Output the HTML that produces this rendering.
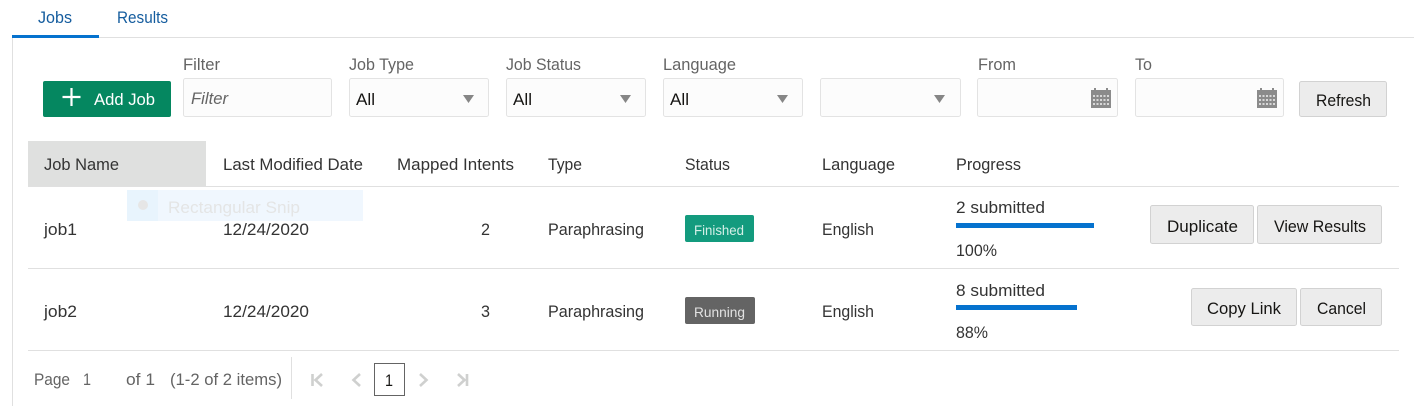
<!DOCTYPE html>
<html><head><meta charset="utf-8"><style>
html,body{margin:0;padding:0;background:#fff;width:1414px;height:406px;overflow:hidden}
svg{display:block}
text{font-family:"Liberation Sans",sans-serif;font-size:17px;fill:#333;}
.l{fill:#646464}
.b{fill:#161513}
.btn{fill:#ececec;stroke:#d2d2d2}
.in{fill:#fcfcfc;stroke:#e3e3e3}
.ar{fill:#868686}
.pg{fill:none;stroke:#cfd0cf;stroke-width:2.600}
</style></head><body>
<svg width="1414" height="406" viewBox="0 0 1414 406" xmlns="http://www.w3.org/2000/svg">
<defs>
<g id="cal"><path fill="#8b8b8b" d="M0 2h3V0h2v2h10V0h2v2h3v18H0z"/><g fill="#d8d8d8"><rect x="2" y="7" width="2" height="2"/><rect x="5.500" y="7" width="2" height="2"/><rect x="9" y="7" width="2" height="2"/><rect x="12.500" y="7" width="2" height="2"/><rect x="16" y="7" width="2" height="2"/><rect x="2" y="11" width="2" height="2"/><rect x="5.500" y="11" width="2" height="2"/><rect x="9" y="11" width="2" height="2"/><rect x="12.500" y="11" width="2" height="2"/><rect x="16" y="11" width="2" height="2"/><rect x="2" y="15" width="2" height="2"/><rect x="5.500" y="15" width="2" height="2"/><rect x="9" y="15" width="2" height="2"/><rect x="12.500" y="15" width="2" height="2"/><rect x="16" y="15" width="2" height="2"/></g></g>
</defs>

<!-- tabs -->
<rect x="12" y="37" width="1402" height="1" fill="#e0e0e0"/>
<rect x="12" y="38" width="1" height="368" fill="#e0e0e0"/>
<rect x="12" y="35" width="87" height="3" fill="#0572ce"/>
<text x="38" y="23" textLength="34" lengthAdjust="spacingAndGlyphs" style="fill:#145c9e">Jobs</text>
<text x="117" y="23" textLength="51" lengthAdjust="spacingAndGlyphs" style="fill:#145c9e">Results</text>

<!-- toolbar -->
<rect x="43" y="81" width="128" height="36" rx="2" fill="#058760"/>
<path d="M71.500 88v18M62.500 97h18" stroke="#fff" stroke-width="2.200" fill="none"/>
<text x="94" y="105" textLength="61" lengthAdjust="spacingAndGlyphs" style="fill:#fff">Add Job</text>

<text class="l" x="183" y="70" textLength="37" lengthAdjust="spacingAndGlyphs">Filter</text>
<rect class="in" x="183.500" y="78.500" width="148" height="38" rx="2"/>
<text class="l" x="191" y="104" textLength="37" lengthAdjust="spacingAndGlyphs" font-style="italic">Filter</text>

<text class="l" x="349" y="70" textLength="65" lengthAdjust="spacingAndGlyphs">Job Type</text>
<rect class="in" x="349.500" y="78.500" width="139" height="38" rx="2"/>
<text class="b" x="356" y="105" textLength="19" lengthAdjust="spacingAndGlyphs">All</text>
<path class="ar" d="M463 95h11l-5.500 8z"/>

<text class="l" x="506" y="70" textLength="75" lengthAdjust="spacingAndGlyphs">Job Status</text>
<rect class="in" x="506.500" y="78.500" width="139" height="38" rx="2"/>
<text class="b" x="513" y="105" textLength="19" lengthAdjust="spacingAndGlyphs">All</text>
<path class="ar" d="M620 95h11l-5.500 8z"/>

<text class="l" x="663" y="70" textLength="73" lengthAdjust="spacingAndGlyphs">Language</text>
<rect class="in" x="663.500" y="78.500" width="139" height="38" rx="2"/>
<text class="b" x="670" y="105" textLength="19" lengthAdjust="spacingAndGlyphs">All</text>
<path class="ar" d="M777 95h11l-5.500 8z"/>

<rect class="in" x="820.500" y="78.500" width="140" height="38" rx="2"/>
<path class="ar" d="M934 95h11l-5.500 8z"/>

<text class="l" x="978" y="70" textLength="38" lengthAdjust="spacingAndGlyphs">From</text>
<rect class="in" x="977.500" y="78.500" width="140" height="38" rx="2"/>
<use href="#cal" x="1091" y="88"/>

<text class="l" x="1135" y="70" textLength="17" lengthAdjust="spacingAndGlyphs">To</text>
<rect class="in" x="1135.500" y="78.500" width="148" height="38" rx="2"/>
<use href="#cal" x="1257" y="88"/>

<rect class="btn" x="1299.500" y="81.500" width="87" height="35" rx="2"/>
<text class="b" x="1316" y="106" textLength="55" lengthAdjust="spacingAndGlyphs">Refresh</text>

<!-- table header -->
<rect x="28" y="141" width="178" height="45" fill="#dfe0df"/>
<rect x="28" y="186" width="1371" height="1" fill="#e0e0e0"/>
<rect x="28" y="268" width="1371" height="1" fill="#e0e0e0"/>
<rect x="28" y="350" width="1371" height="1" fill="#e0e0e0"/>
<text x="44" y="170" textLength="75" lengthAdjust="spacingAndGlyphs">Job Name</text>
<text x="223" y="170" textLength="140" lengthAdjust="spacingAndGlyphs">Last Modified Date</text>
<text x="397" y="170" textLength="117" lengthAdjust="spacingAndGlyphs">Mapped Intents</text>
<text x="548" y="170" textLength="34" lengthAdjust="spacingAndGlyphs">Type</text>
<text x="685" y="170" textLength="45" lengthAdjust="spacingAndGlyphs">Status</text>
<text x="822" y="170" textLength="73" lengthAdjust="spacingAndGlyphs">Language</text>
<text x="956" y="170" textLength="65" lengthAdjust="spacingAndGlyphs">Progress</text>

<!-- snip overlay -->
<rect x="127" y="190" width="236" height="31" fill="#f0f7fe"/>
<rect x="127" y="190" width="31" height="31" fill="#e8f4fd"/>
<circle cx="143" cy="205" r="5" fill="#e6e6e6"/>
<text x="168" y="213" textLength="132" lengthAdjust="spacingAndGlyphs" style="fill:#e4e5e5">Rectangular Snip</text>

<!-- row 1 -->
<text x="44" y="235" textLength="33" lengthAdjust="spacingAndGlyphs">job1</text>
<text x="223" y="235" textLength="86" lengthAdjust="spacingAndGlyphs">12/24/2020</text>
<text x="481" y="235" textLength="9" lengthAdjust="spacingAndGlyphs">2</text>
<text x="548" y="235" textLength="96" lengthAdjust="spacingAndGlyphs">Paraphrasing</text>
<rect x="685" y="215" width="69" height="27" rx="2" fill="#139b7e"/>
<text x="694" y="235" textLength="50" lengthAdjust="spacingAndGlyphs" style="font-size:14px;fill:#d4efe7">Finished</text>
<text x="822" y="235" textLength="52" lengthAdjust="spacingAndGlyphs">English</text>
<text x="956" y="213" textLength="89" lengthAdjust="spacingAndGlyphs">2 submitted</text>
<rect x="956" y="223" width="138" height="5" fill="#0572ce"/>
<text x="956" y="256" textLength="41" lengthAdjust="spacingAndGlyphs">100%</text>
<rect class="btn" x="1150.500" y="205.500" width="103" height="38" rx="2"/>
<text class="b" x="1167" y="232" textLength="71" lengthAdjust="spacingAndGlyphs">Duplicate</text>
<rect class="btn" x="1257.500" y="205.500" width="124" height="38" rx="2"/>
<text class="b" x="1274" y="232" textLength="92" lengthAdjust="spacingAndGlyphs">View Results</text>

<!-- row 2 -->
<text x="44" y="317" textLength="33" lengthAdjust="spacingAndGlyphs">job2</text>
<text x="223" y="317" textLength="86" lengthAdjust="spacingAndGlyphs">12/24/2020</text>
<text x="481" y="317" textLength="9" lengthAdjust="spacingAndGlyphs">3</text>
<text x="548" y="317" textLength="96" lengthAdjust="spacingAndGlyphs">Paraphrasing</text>
<rect x="685" y="297" width="70" height="27" rx="2" fill="#646464"/>
<text x="694" y="317" textLength="51" lengthAdjust="spacingAndGlyphs" style="font-size:14px;fill:#e2e2e2">Running</text>
<text x="822" y="317" textLength="52" lengthAdjust="spacingAndGlyphs">English</text>
<text x="956" y="296" textLength="89" lengthAdjust="spacingAndGlyphs">8 submitted</text>
<rect x="956" y="305" width="121" height="5" fill="#0572ce"/>
<text x="956" y="338" textLength="32" lengthAdjust="spacingAndGlyphs">88%</text>
<rect class="btn" x="1191.500" y="288.500" width="105" height="37" rx="2"/>
<text class="b" x="1207" y="314" textLength="74" lengthAdjust="spacingAndGlyphs">Copy Link</text>
<rect class="btn" x="1300.500" y="288.500" width="81" height="37" rx="2"/>
<text class="b" x="1317" y="314" textLength="49" lengthAdjust="spacingAndGlyphs">Cancel</text>

<!-- pagination -->
<text class="l" x="34" y="385" textLength="36" lengthAdjust="spacingAndGlyphs">Page</text>
<text class="l" x="83" y="385" textLength="8" lengthAdjust="spacingAndGlyphs">1</text>
<text class="l" x="126" y="385" textLength="29" lengthAdjust="spacingAndGlyphs">of 1</text>
<text class="l" x="170" y="385" textLength="112" lengthAdjust="spacingAndGlyphs">(1-2 of 2 items)</text>
<rect x="291" y="357" width="1" height="42" fill="#e0e0e0"/>
<path class="pg" d="M312.500 374v12M322 374l-6.500 6 6.500 6"/>
<path class="pg" d="M360 374l-6.500 6 6.500 6"/>
<rect x="374.500" y="363.500" width="30" height="32" fill="#fff" stroke="#646464"/>
<text class="b" x="385" y="386" textLength="8" lengthAdjust="spacingAndGlyphs">1</text>
<path class="pg" d="M420 374l6.500 6-6.500 6"/>
<path class="pg" d="M458 374l6.500 6-6.500 6M467 374v12"/>
</svg>
</body></html>
